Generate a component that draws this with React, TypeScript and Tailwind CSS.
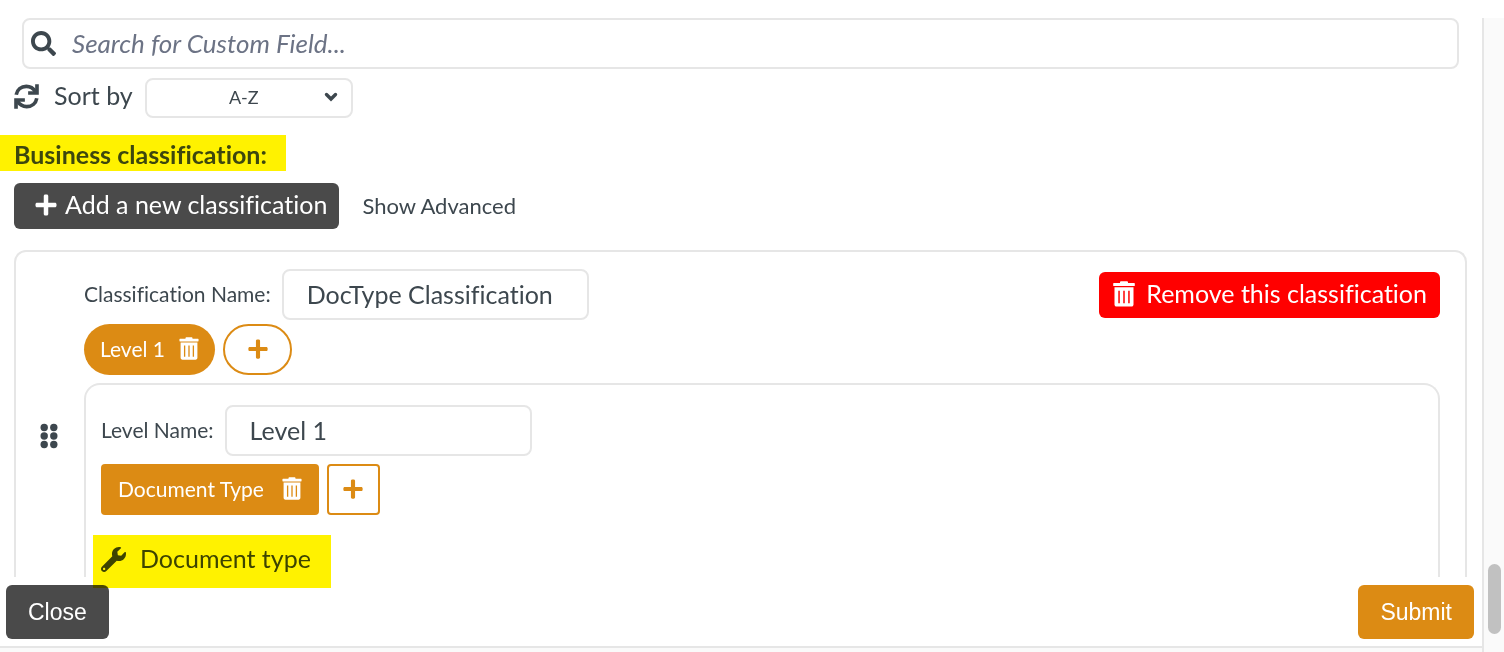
import { useState } from "react";
import { FaPlus, FaSearch, FaWrench } from "react-icons/fa";

interface IconProps {
  className?: string;
}

function TrashIcon({ className }: IconProps) {
  return (
    <svg viewBox="0 0 22 26" className={className} fill="currentColor" aria-hidden="true">
      <path d="M7 1.6C7 .7 7.5.3 8.3.3h5.4c.8 0 1.3.4 1.3 1.3v.3h6.2c.4 0 .6.2.6.6v1.9c0 .3-.2.6-.6.6H.8c-.4 0-.6-.3-.6-.6V2.500c0-.4.2-.6.6-.6H7z" />
      <path
        fillRule="evenodd"
        d="M1.500 6.300h19v17.200c0 1.300-.8 2.100-2.100 2.100H3.600c-1.300 0-2.100-.8-2.100-2.100zM5.300 9.700v12.600h1.500V9.700zm4.950 0v12.600h1.500V9.700zm4.950 0v12.600h1.500V9.700z"
      />
    </svg>
  );
}

function RefreshIcon({ className }: IconProps) {
  return (
    <svg viewBox="0 0 26 26" className={className} aria-hidden="true">
      <g fill="none" stroke="currentColor" strokeWidth="3.800">
        <path d="M2.300 11.200C3.200 5.900 7.500 2.500 12.800 2.500c4 0 7.300 1.900 9.500 5.500" />
        <path d="M23.700 14.800C22.800 20.100 18.500 23.500 13.200 23.500c-4 0-7.300-1.900-9.500-5.500" />
        <path d="M23.900 .2v9.200h-9.200" />
        <path d="M2.100 25.800v-9.200h9.200" />
      </g>
    </svg>
  );
}

function GripIcon({ className }: IconProps) {
  return (
    <svg viewBox="0 0 18 26" className={className} fill="currentColor" aria-hidden="true">
      <circle cx="4.200" cy="4.500" r="3.700" />
      <circle cx="13.800" cy="4.500" r="3.700" />
      <circle cx="4.200" cy="13" r="3.700" />
      <circle cx="13.800" cy="13" r="3.700" />
      <circle cx="4.200" cy="21.500" r="3.700" />
      <circle cx="13.800" cy="21.500" r="3.700" />
    </svg>
  );
}

function ChevronIcon({ className }: IconProps) {
  return (
    <svg viewBox="0 0 14 10" className={className} aria-hidden="true">
      <path d="M2.500 2.500L7 7l4.500-4.500" fill="none" stroke="currentColor" strokeWidth="3.400" strokeLinecap="round" />
    </svg>
  );
}

export default function App() {
  const [search, setSearch] = useState("");
  const [sort, setSort] = useState("A-Z");
  const [name, setName] = useState("DocType Classification");
  const [levelName, setLevelName] = useState("Level 1");

  return (
    <div className="flex min-h-screen flex-col bg-white pt-[18px] font-['Lato',sans-serif] text-[25px] text-[#3d474e] [font-variant-ligatures:no-common-ligatures]">
      <div className="flex flex-1 bg-[#fafafa]">
        <main className="mb-[5px] min-w-0 flex-1 border-b-2 border-[#e6e6e6] bg-white">
          <label className="mr-[23px] ml-[22px] flex h-[51px] items-center gap-4 rounded-lg border-2 border-[#e6e6e6] px-[7px]">
            <FaSearch className="size-[25px] shrink-0" />
            <input
              type="text"
              aria-label="Search for Custom Field"
              value={search}
              onChange={(e) => setSearch(e.target.value)}
              placeholder="Search for Custom Field..."
              className="w-full text-[26px] italic outline-none placeholder:text-[#6c7385]"
            />
          </label>

          <div className="mt-2 flex h-[42px] items-center px-3.5">
            <button type="button" aria-label="Refresh" className="mr-[15px] pb-1">
              <RefreshIcon className="size-[25px]" />
            </button>
            <label htmlFor="sort" className="mr-3 pb-1">
              Sort by
            </label>
            <div className="relative">
              <select
                id="sort"
                value={sort}
                onChange={(e) => setSort(e.target.value)}
                className="block h-10 w-52 appearance-none rounded-lg border-2 border-[#e6e6e6] bg-white pr-2.5 pb-0.5 text-center text-lg"
              >
                <option>A-Z</option>
                <option>Z-A</option>
              </select>
              <ChevronIcon className="pointer-events-none absolute top-3.5 right-[15px] h-2.5 w-3.5" />
            </div>
          </div>

          <h2 className="mt-4 flex h-9 w-[286px] items-center bg-[#fff200] pt-1 pl-3.5 font-bold whitespace-nowrap text-[#3d470e]">
            Business classification:
          </h2>

          <div className="mt-3 flex items-center gap-[23px] px-3.5">
            <button
              type="button"
              className="flex h-[46px] items-center gap-[7px] rounded-md bg-[#4a4a4a] pr-3 pb-0.5 pl-5 text-white"
            >
              <FaPlus className="size-6" />
              Add a new classification
            </button>
            <button type="button" className="pb-0.5 text-[22px]">
              Show Advanced
            </button>
          </div>

          <section className="mt-[21px] mr-[15px] ml-3.5 flex rounded-t-xl border-2 border-b-0 border-[#e6e6e6] pt-[17px] pr-[25px] pl-6">
            <button type="button" aria-label="Drag to reorder" className="mt-[154px] mr-[26px] self-start">
              <GripIcon className="h-[26px] w-[18px]" />
            </button>

            <div className="min-w-0 flex-1">
              <div className="flex items-center">
                <label htmlFor="classification-name" className="mr-[11px] pb-0.5 text-[21px]">
                  Classification Name:
                </label>
                <input
                  id="classification-name"
                  type="text"
                  value={name}
                  onChange={(e) => setName(e.target.value)}
                  className="h-[51px] w-[307px] rounded-lg border-2 border-[#e6e6e6] px-[23px] pb-0.5"
                />
                <button
                  type="button"
                  className="ml-auto flex h-[46px] items-center gap-[11px] rounded-md bg-[#ff0000] pr-[13px] pb-0.5 pl-3.5 text-white"
                >
                  <TrashIcon className="h-[26px] w-[22px]" />
                  Remove this classification
                </button>
              </div>

              <div className="mt-1 flex gap-2">
                <button
                  type="button"
                  className="flex h-[51px] items-center gap-3.5 rounded-full bg-[#dc8b14] px-4 pb-0.5 text-[21px] text-white"
                >
                  Level 1
                  <TrashIcon className="h-[23px] w-5" />
                </button>
                <button
                  type="button"
                  aria-label="Add level"
                  className="flex h-[51px] w-[69px] items-center justify-center rounded-full border-2 border-[#dc8b14] pb-0.5 text-[#dc8b14]"
                >
                  <FaPlus className="size-[22px]" />
                </button>
              </div>

              <div className="mt-2 rounded-t-2xl border-2 border-b-0 border-[#e6e6e6] px-[15px] pt-5">
                <div className="flex items-center">
                  <label htmlFor="level-name" className="mr-[11px] pb-0.5 text-[21px]">
                    Level Name:
                  </label>
                  <input
                    id="level-name"
                    type="text"
                    value={levelName}
                    onChange={(e) => setLevelName(e.target.value)}
                    className="h-[51px] w-[307px] rounded-lg border-2 border-[#e6e6e6] px-[23px] pb-0.5"
                  />
                </div>

                <div className="mt-2 flex gap-2">
                  <button
                    type="button"
                    className="flex h-[51px] items-center gap-[18px] rounded-sm bg-[#dc8b14] px-[17px] pb-0.5 text-[21px] text-white"
                  >
                    Document Type
                    <TrashIcon className="h-[23px] w-5" />
                  </button>
                  <button
                    type="button"
                    aria-label="Add field"
                    className="flex h-[51px] w-[53px] items-center justify-center rounded-sm border-2 border-[#dc8b14] pb-0.5 text-[#dc8b14]"
                  >
                    <FaPlus className="size-[22px]" />
                  </button>
                </div>

                <div className="relative mt-5 flex h-[42px] items-center gap-3.5 pt-1.5">
                  <FaWrench className="size-[25px]" />
                  Document type
                  {/* marker stroke runs past the row and over the footer button */}
                  <span className="absolute top-0 -left-2 z-10 h-[53px] w-[238px] bg-[#fff200] mix-blend-multiply" />
                </div>
              </div>
            </div>
          </section>

          <footer className="mt-2 mb-[7px] flex justify-between pr-2 pl-1.5 font-['Liberation_Sans',Arial,sans-serif] text-[23px] text-white">
            <button type="button" className="h-[54px] rounded-md bg-[#4a4a4a] px-[22px]">
              Close
            </button>
            <button type="button" className="h-[54px] rounded-md bg-[#dc8b14] px-[22px]">
              Submit
            </button>
          </footer>
        </main>

        <aside className="flex w-[22px] flex-col items-end border-l-2 border-[#e6e6e6] pr-[3px] pb-[19px]">
          <div className="mt-auto h-[70px] w-[13px] rounded-full bg-[#c1c1c1]" />
        </aside>
      </div>
    </div>
  );
}
